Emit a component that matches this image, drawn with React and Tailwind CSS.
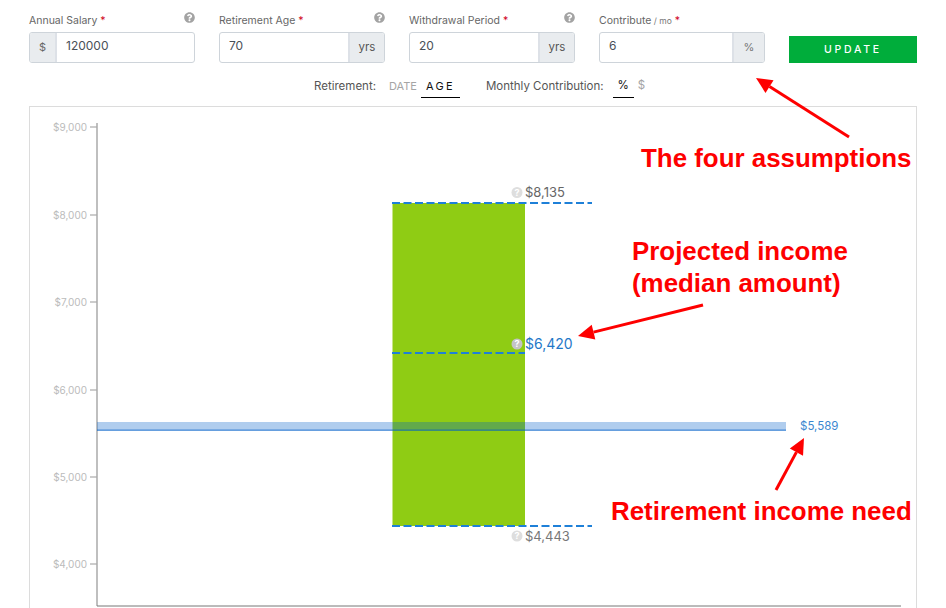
import React from 'react';
import { FaQuestionCircle } from 'react-icons/fa';

const fields = [
  { label: 'Annual Salary', value: '120000', prefix: '$', help: true },
  { label: 'Retirement Age', value: '70', suffix: 'yrs', help: true },
  { label: 'Withdrawal Period', value: '20', suffix: 'yrs', help: true },
  { label: 'Contribute', unit: '/ mo', value: '6', suffix: '%', small: true },
];

const ticks = [
  { label: '$9,000', y: 127 },
  { label: '$8,000', y: 215 },
  { label: '$7,000', y: 302 },
  { label: '$6,000', y: 390 },
  { label: '$5,000', y: 477 },
  { label: '$4,000', y: 564 },
];

const Field = ({ label, unit, value, prefix, suffix, help, small }) => (
  <div className="w-[166px] shrink-0">
    <div className="flex h-[20px] items-start justify-between">
      <label className="mt-[2px] text-[10.5px] leading-[16px] text-[#666]">
        {label}
        {unit && <span className="text-[8.5px] text-[#777]"> {unit}</span>}
        <span className="text-[#d0021b]"> *</span>
      </label>
      {help && <FaQuestionCircle className="mt-[1px] text-[11px] text-[#a3a3a3]" />}
    </div>
    <div className="mt-[1px] flex h-[31px] overflow-hidden rounded-[3px] border border-[#ced4da] bg-white">
      {prefix && (
        <span className="flex w-[27px] items-center justify-center border-r-2 border-[#dde1e7] bg-[#e9ecef] text-[11px] text-[#666]">
          {prefix}
        </span>
      )}
      <input
        readOnly
        defaultValue={value}
        className="w-0 min-w-0 flex-1 pb-[3px] pl-[9px] text-[12px] text-[#495057] outline-none"
      />
      {suffix && (
        <span
          className={`flex items-center justify-center border-l-2 border-[#dde1e7] bg-[#e9ecef] ${small ? 'w-[32px] text-[11px] text-[#777]' : 'w-[36px] text-[11.5px] text-[#555]'}`}
        >
          {suffix}
        </span>
      )}
    </div>
  </div>
);

const Tab = ({ active, children, className }) => (
  <span
    className={`flex h-[23px] items-center border-b ${active ? 'border-black text-[#111]' : 'border-transparent text-[#a5a5a5]'} ${className}`}
  >
    {children}
  </span>
);

const HelpDot = ({ x, y, dark }) => (
  <g>
    <circle cx={x} cy={y} r="5.5" fill={dark ? '#c4c4c4' : '#dedede'} />
    <text x={x} y={y + 3.2} textAnchor="middle" fontSize="9" fontWeight="700" fill="#fff">?</text>
  </g>
);

// chart uses page coordinates so it lines up with the annotations
const Chart = () => (
  <svg viewBox="30 107 886 501" className="block h-[501px] w-[886px]" style={{ fontFamily: 'Inter, sans-serif' }}>
    {ticks.map(t => (
      <g key={t.label}>
        <text x="87" y={t.y + 3.5} textAnchor="end" fontSize="10" fill="#bbb">{t.label}</text>
        <line x1="90" x2="97" y1={t.y} y2={t.y} stroke="#999" strokeWidth="1" />
      </g>
    ))}
    <line x1="97" x2="97" y1="123" y2="606" stroke="#aaa" strokeWidth="1.5" />
    <line x1="97" x2="901" y1="606" y2="606" stroke="#777" strokeWidth="1" />

    <rect x="392.5" y="203" width="132.5" height="323" fill="#8fcc14" />
    <rect x="97" y="422" width="689" height="8" fill="#005fc8" fillOpacity="0.31" />
    <rect x="97" y="429.5" width="689" height="1.5" fill="#005fc8" fillOpacity="0.6" />

    <line x1="392" x2="592" y1="203" y2="203" stroke="#1e80d8" strokeWidth="2" strokeDasharray="8 3.5" />
    <line x1="392" x2="525" y1="353" y2="353" stroke="#1e80d8" strokeWidth="2" strokeDasharray="8 3.5" />
    <line x1="392" x2="592" y1="526" y2="526" stroke="#1e80d8" strokeWidth="2" strokeDasharray="8 3.5" />

    <HelpDot x={517} y={192.5} />
    <text x="525" y="197" fontSize="13" fill="#666">$8,135</text>
    <HelpDot x={517} y={344} dark />
    <text x="525" y="348.5" fontSize="14" fill="#1f78c8">$6,420</text>
    <HelpDot x={517} y={536} />
    <text x="525" y="541" fontSize="13" fill="#777">$4,443</text>
    <text x="800" y="430" fontSize="11.5" fill="#3b87d0">$5,589</text>
  </svg>
);

const Arrow = ({ x1, y1, x2, y2 }) => {
  const len = Math.hypot(x2 - x1, y2 - y1);
  const ux = (x2 - x1) / len;
  const uy = (y2 - y1) / len;
  const bx = x2 - ux * 16;
  const by = y2 - uy * 16;
  const pts = `${x2},${y2} ${bx - uy * 7.5},${by + ux * 7.5} ${bx + uy * 7.5},${by - ux * 7.5}`;
  return (
    <g>
      <line x1={x1} y1={y1} x2={bx} y2={by} stroke="#fe0000" strokeWidth="3" />
      <polygon points={pts} fill="#fe0000" />
    </g>
  );
};

const Note = ({ className, children }) => (
  <div className={`absolute text-[25.9px] font-bold leading-[32px] whitespace-nowrap text-[#fe0000] ${className}`} style={{ fontFamily: '"Liberation Sans", Arial, sans-serif' }}>
    {children}
  </div>
);

const App = () => {
  return (
    <div className="relative h-[608px] w-[946px] overflow-hidden bg-white" style={{ fontFamily: 'Inter, sans-serif' }}>
      <div className="flex gap-[24px] pl-[29px] pt-[11px]">
        {fields.map(f => (
          <Field key={f.label} {...f} />
        ))}
        <button className="mt-[25px] h-[27px] w-[128px] bg-[#00ad3b] text-[10.5px] font-medium tracking-[0.26em] text-white">
          UPDATE
        </button>
      </div>

      <div className="mt-[12px] flex h-[23px] items-center justify-center pl-[13px] text-[11.5px] text-[#555]">
        <span>Retirement:</span>
        <Tab className="ml-[13px] text-[11px]">DATE</Tab>
        <Tab active className="ml-[4px] w-[39px] justify-center text-[11px] tracking-[0.2em]">AGE</Tab>
        <span className="ml-[26px]">Monthly Contribution:</span>
        <Tab active className="ml-[9px] w-[21px] justify-center">%</Tab>
        <Tab className="ml-[4px]">$</Tab>
      </div>

      <div className="ml-[29px] mt-[8px] w-[888px] border border-[#dcdcdc]">
        <Chart />
      </div>

      {/* annotations drawn over the screenshot */}
      <svg className="absolute inset-0 h-[608px] w-[946px]" viewBox="0 0 946 608">
        <Arrow x1={849} y1={137} x2={756} y2={78} />
        <Arrow x1={703} y1={305} x2={578} y2={336} />
        <Arrow x1={776} y1={490} x2={804} y2={438} />
      </svg>
      <Note className="left-[641px] top-[142px]">The four assumptions</Note>
      <Note className="left-[632px] top-[235px]">Projected income<br />(median amount)</Note>
      <Note className="left-[611px] top-[495px]">Retirement income need</Note>
    </div>
  );
};

export default App;
